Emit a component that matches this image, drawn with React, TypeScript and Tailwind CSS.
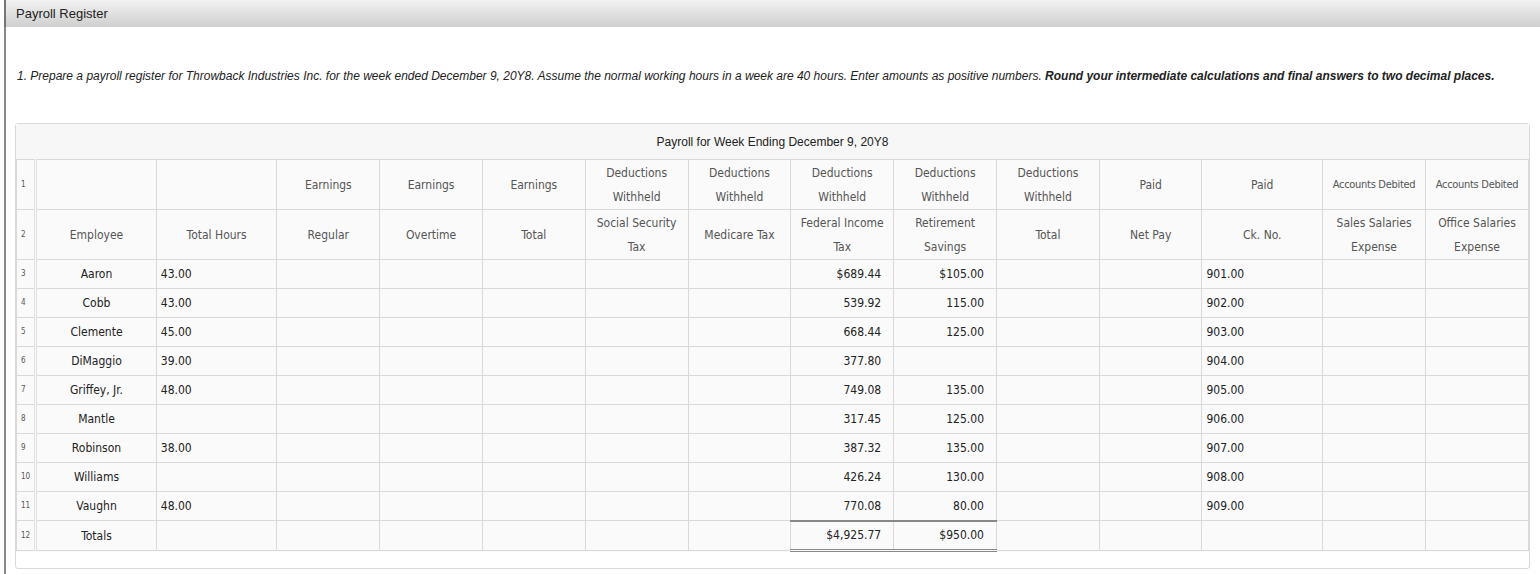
const cols = [18, 121, 121, 103, 103, 103, 103, 103, 103, 103, 103, 103, 121, 103, 103];

const h1 = ['', '', 'Earnings', 'Earnings', 'Earnings', 'Deductions Withheld', 'Deductions Withheld', 'Deductions Withheld', 'Deductions Withheld', 'Deductions Withheld', 'Paid', 'Paid', 'Accounts Debited', 'Accounts Debited'];
const h2 = ['Employee', 'Total Hours', 'Regular', 'Overtime', 'Total', 'Social Security Tax', 'Medicare Tax', 'Federal Income Tax', 'Retirement Savings', 'Total', 'Net Pay', 'Ck. No.', 'Sales Salaries Expense', 'Office Salaries Expense'];

const rows = [
  ['Aaron', '43.00', '$689.44', '$105.00', '901.00'],
  ['Cobb', '43.00', '539.92', '115.00', '902.00'],
  ['Clemente', '45.00', '668.44', '125.00', '903.00'],
  ['DiMaggio', '39.00', '377.80', '', '904.00'],
  ['Griffey, Jr.', '48.00', '749.08', '135.00', '905.00'],
  ['Mantle', '', '317.45', '125.00', '906.00'],
  ['Robinson', '38.00', '387.32', '135.00', '907.00'],
  ['Williams', '', '426.24', '130.00', '908.00'],
  ['Vaughn', '48.00', '770.08', '80.00', '909.00'],
];

const cell = 'border border-[#d9d9d9] px-1';
const num = `${cell} border-r-[3px] border-r-[#e0e0e0] border-double text-[8px] text-[#555]`;

export default function App() {
  return (
    <div className="w-[1540px] h-[574px] bg-white overflow-hidden" style={{ fontFamily: '"Liberation Sans", Arial, sans-serif' }}>
      <div className="h-[27px] ml-[4px] border-l-2 border-[#777] bg-gradient-to-b from-[#f2f2f2] to-[#cfcfcf] flex items-center pl-[10px] text-[13px] text-[#222]">
        Payroll Register
      </div>
      <div className="ml-[4px] border-l-2 border-[#888] h-[547px] pl-[9px] pr-[10px]">
        <p className="pt-[40px] pl-[2px] text-[12px] italic text-[#222]">
          1. Prepare a payroll register for Throwback Industries Inc. for the week ended December 9, 20Y8. Assume the normal working hours in a week are 40 hours. Enter amounts as positive numbers.{' '}
          <b>Round your intermediate calculations and final answers to two decimal places.</b>
        </p>
        <div className="mt-[38px] w-[1515px] border border-[#d9d9d9] rounded-[3px] h-[446px]">
          <div className="h-[35px] bg-[#f7f7f7] flex items-center justify-center text-[12px] text-[#222]">
            Payroll for Week Ending December 9, 20Y8
          </div>
          <table className="border-collapse table-fixed bg-[#fafafa] text-[12px]" style={{ fontFamily: '"DejaVu Sans Condensed", "Liberation Sans", sans-serif' }}>
            <colgroup>
              {cols.map((w, i) => <col key={i} style={{ width: w }} />)}
            </colgroup>
            <tbody>
              <tr className="h-[50px]">
                <td className={num}>1</td>
                {h1.map((t, i) => (
                  <td key={i} className={`${cell} text-center text-[#555] leading-[24px] ${i >= 12 ? 'whitespace-nowrap text-[11px] tracking-[-0.3px] px-0' : ''}`}>{t}</td>
                ))}
              </tr>
              <tr className="h-[50px]">
                <td className={num}>2</td>
                {h2.map((t, i) => (
                  <td key={i} className={`${cell} text-center text-[#555] leading-[24px]`}>{t}</td>
                ))}
              </tr>
              {rows.map((r, i) => (
                <tr key={i} className="h-[29px] text-[#222]">
                  <td className={num}>{i + 3}</td>
                  <td className={`${cell} text-center`}>{r[0]}</td>
                  <td className={cell}>{r[1]}</td>
                  <td className={cell} />
                  <td className={cell} />
                  <td className={cell} />
                  <td className={cell} />
                  <td className={cell} />
                  <td className={`${cell} text-right pr-[12px] ${i === 8 ? 'border-b-2 border-b-[#888]' : ''}`}>{r[2]}</td>
                  <td className={`${cell} text-right pr-[12px] ${i === 8 ? 'border-b-2 border-b-[#888]' : ''}`}>{r[3]}</td>
                  <td className={cell} />
                  <td className={cell} />
                  <td className={cell}>{r[4]}</td>
                  <td className={cell} />
                  <td className={cell} />
                </tr>
              ))}
              <tr className="h-[30px] text-[#222]">
                <td className={num}>12</td>
                <td className={`${cell} text-center`}>Totals</td>
                <td className={cell} />
                <td className={cell} />
                <td className={cell} />
                <td className={cell} />
                <td className={cell} />
                <td className={cell} />
                <td className={`${cell} text-right pr-[12px] border-b-[3px] border-b-[#888] border-double`}>$4,925.77</td>
                <td className={`${cell} text-right pr-[12px] border-b-[3px] border-b-[#888] border-double`}>$950.00</td>
                <td className={cell} />
                <td className={cell} />
                <td className={cell} />
                <td className={cell} />
                <td className={cell} />
              </tr>
            </tbody>
          </table>
        </div>
      </div>
    </div>
  );
}
